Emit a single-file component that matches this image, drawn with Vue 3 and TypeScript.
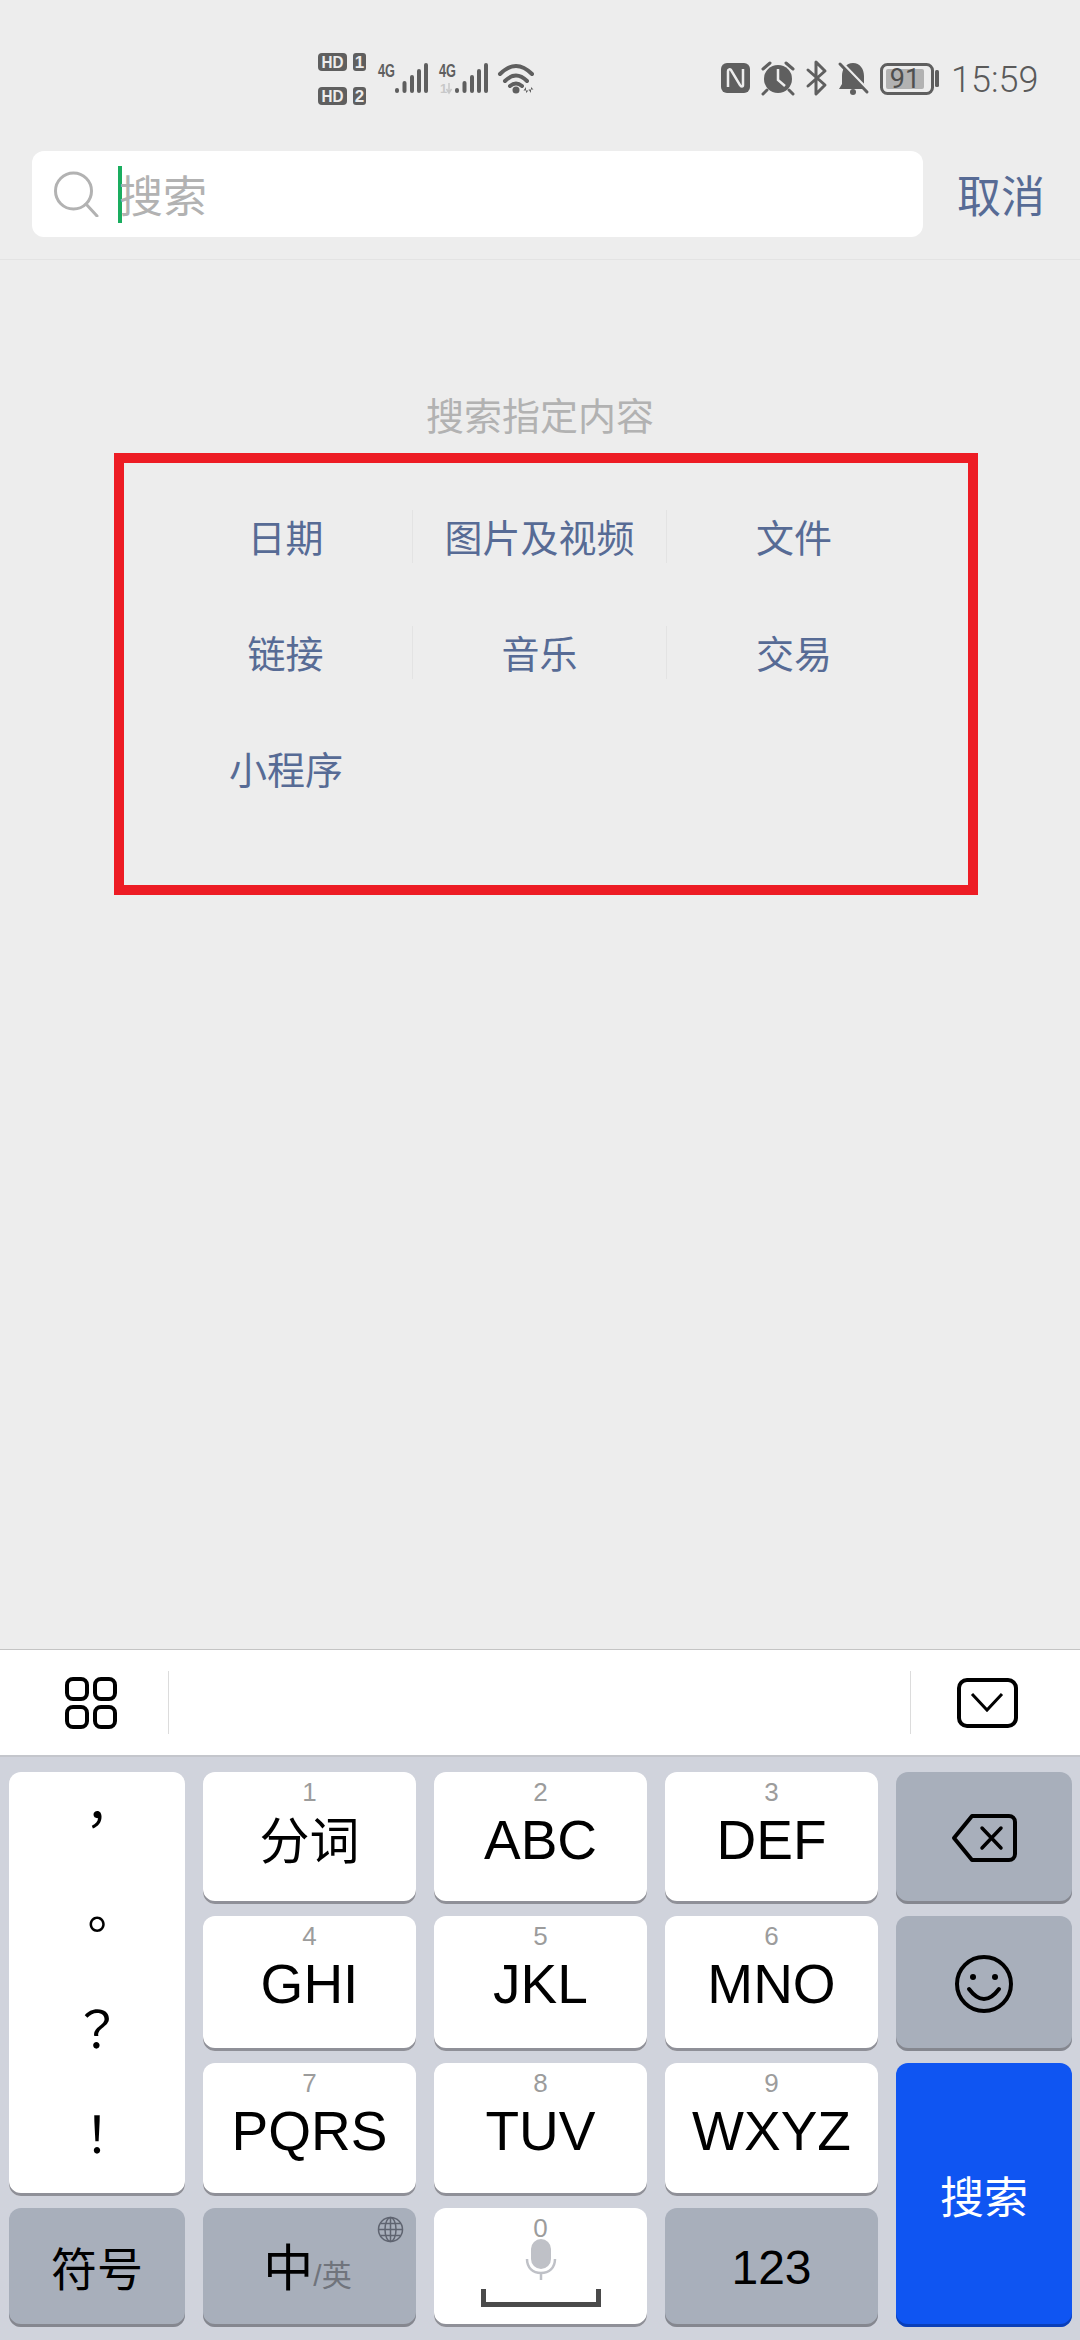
<template>
  <div class="page">
    <div class="status">
      <svg class="status-left" width="222" height="60" viewBox="0 0 222 60">
        <rect x="0" y="3" width="29" height="18" rx="4" fill="#5f5f5f" />
        <text x="14.5" y="18" class="hd" textLength="22" lengthAdjust="spacingAndGlyphs">HD</text>
        <rect x="35" y="3" width="13" height="18" rx="3" fill="#5f5f5f" />
        <text x="41.5" y="18" class="hd">1</text>
        <rect x="0" y="37" width="29" height="18" rx="4" fill="#5f5f5f" />
        <text x="14.5" y="52" class="hd" textLength="22" lengthAdjust="spacingAndGlyphs">HD</text>
        <rect x="35" y="37" width="13" height="18" rx="3" fill="#5f5f5f" />
        <text x="41.5" y="52" class="hd">2</text>

        <text x="60" y="27" class="net" textLength="17" lengthAdjust="spacingAndGlyphs">4G</text>
        <rect v-for="b in bars" :key="'a' + b.x" :x="77 + b.x" :y="43 - b.h" width="4" :height="b.h" rx="2" fill="#5f5f5f" />
        <text x="121" y="27" class="net" textLength="17" lengthAdjust="spacingAndGlyphs">4G</text>
        <rect v-for="b in bars" :key="'b' + b.x" :x="137 + b.x" :y="43 - b.h" width="4" :height="b.h" rx="2" fill="#5f5f5f" />
        <text x="122" y="43" class="net-small">1</text>
        <path d="M131 33v10M128.500 39l2.500 4 2.500-4" stroke="#c8c8c8" stroke-width="1.500" fill="none" />

        <path d="M182 24Q198 8 214 24M187 31Q198 20 209 31M192 36Q198 31 204 36" stroke="#5f5f5f" stroke-width="4" fill="none" stroke-linecap="round" />
        <circle cx="198" cy="40" r="3.500" fill="#5f5f5f" />
        <path d="M208 43v-6l-2.500 3.500h5zM213 37v6l-2.500-3.500h5z" fill="#5f5f5f" />
      </svg>

      <svg class="status-right" width="220" height="60" viewBox="0 0 220 60">
        <rect x="1" y="13" width="29" height="30" rx="6" fill="#5f5f5f" />
        <path d="M8 37V21c0-2 2-2 3-1l9 15c1 2 3 2 3 0V19" stroke="#ededed" stroke-width="2.500" fill="none" />

        <circle cx="58" cy="29" r="14" fill="#5f5f5f" />
        <path d="M58 19v11l7 6" stroke="#ededed" stroke-width="2.500" fill="none" />
        <path d="M43 19l7-6M66 13l7 6M47 40l-4 4M69 40l4 4" stroke="#5f5f5f" stroke-width="3" stroke-linecap="round" />

        <path d="M88 20l17 15-9 9V12l9 9-17 15" stroke="#5f5f5f" stroke-width="3" fill="none" stroke-linejoin="round" stroke-linecap="round" />

        <path d="M133 13c-7 0-11 6-11 13v8l-3 5h28l-3-5v-8c0-7-4-13-11-13z" fill="#5f5f5f" />
        <circle cx="133" cy="42" r="3" fill="#5f5f5f" />
        <path d="M122 13l27 28" stroke="#ededed" stroke-width="3" />
        <path d="M120 14l27 28" stroke="#5f5f5f" stroke-width="3" stroke-linecap="round" />

        <rect x="161.500" y="14.500" width="51" height="29" rx="6" stroke="#5f5f5f" stroke-width="3" fill="none" />
        <rect x="166" y="19" width="38" height="20" rx="2" fill="#b2b2b2" />
        <rect x="215" y="20" width="4" height="17" rx="1.500" fill="#5f5f5f" />
        <text x="185" y="38" class="battery">91</text>
      </svg>

      <span class="time">15:59</span>
    </div>

    <div class="search-row">
      <div class="search-box">
        <svg class="search-icon" width="46" height="46" viewBox="0 0 46 46">
          <circle cx="20.500" cy="20" r="18" stroke="#b2b2b2" stroke-width="3" fill="none" />
          <path d="M33 33l11 12" stroke="#b2b2b2" stroke-width="3" stroke-linecap="round" />
        </svg>
        <i class="cursor"></i>
        <span class="placeholder">搜索</span>
      </div>
      <span class="cancel">取消</span>
    </div>

    <div class="content">
      <p class="hint">搜索指定内容</p>
      <div class="marked">
        <div class="types">
          <div
            v-for="(t, i) in types"
            :key="t"
            class="type"
            :class="{ divided: i % 3 !== 2 && i !== types.length - 1 }"
          >{{ t }}</div>
        </div>
      </div>
    </div>

    <div class="keyboard">
      <div class="toolbar">
        <svg class="tool-grid" width="52" height="52" viewBox="0 0 52 52" fill="none" stroke="#000" stroke-width="4">
          <rect x="2" y="2" width="20" height="20" rx="6" />
          <rect x="30" y="2" width="20" height="20" rx="6" />
          <rect x="2" y="30" width="20" height="20" rx="6" />
          <rect x="30" y="30" width="20" height="20" rx="6" />
        </svg>
        <i class="tool-line"></i>
        <div class="tool-space"></div>
        <i class="tool-line"></i>
        <svg class="tool-hide" width="61" height="50" viewBox="0 0 61 50" fill="none" stroke="#000">
          <rect x="2" y="2" width="57" height="46" rx="8" stroke-width="4" />
          <path d="M15 16l15 16 15-16" stroke-width="3" />
        </svg>
      </div>

      <div class="keys">
        <div class="key punct">
          <span v-for="p in puncts" :key="p">{{ p }}</span>
        </div>

        <div v-for="k in letterKeys" :key="k.num" class="key letter">
          <span class="num">{{ k.num }}</span>
          <span class="label" :class="{ cjk: k.num === '1' }">{{ k.label }}</span>
        </div>

        <div class="key dark del">
          <svg width="66" height="50" viewBox="0 0 66 50" fill="none" stroke="#000" stroke-linejoin="round">
            <path d="M21 3H58a6 6 0 0 1 6 6V41a6 6 0 0 1-6 6H21L3 25z" stroke-width="4" />
            <path d="M31 15l19 20M50 15L31 35" stroke-width="3.500" stroke-linecap="round" />
          </svg>
        </div>
        <div class="key dark smile">
          <svg width="60" height="60" viewBox="0 0 60 60" fill="none" stroke="#000">
            <circle cx="30" cy="30" r="27" stroke-width="4" />
            <circle cx="19" cy="23" r="3" fill="#000" stroke="none" />
            <circle cx="41" cy="23" r="3" fill="#000" stroke="none" />
            <path d="M15 35Q30 55 45 35" stroke-width="4" stroke-linecap="round" />
          </svg>
        </div>

        <div class="key go">搜索</div>

        <div class="key dark symbol">符号</div>
        <div class="key dark lang">
          <svg class="globe" width="27" height="27" viewBox="0 0 27 27" fill="none" stroke="#5f6470" stroke-width="1.500">
            <circle cx="13.500" cy="13.500" r="12" />
            <ellipse cx="13.500" cy="13.500" rx="5.500" ry="12" />
            <path d="M13.500 1.500v24M1.500 13.500h24M3.500 7.500h20M3.500 19.500h20" />
          </svg>
          <span class="zh">中</span><span class="en">/英</span>
        </div>
        <div class="key space">
          <span class="num">0</span>
          <svg class="mic" width="32" height="41" viewBox="0 0 32 41" fill="none">
            <rect x="6" y="0" width="20" height="30" rx="10" fill="#bfc1c7" />
            <path d="M2 20c0 9 6 14 14 14s14-5 14-14M16 34v7" stroke="#bfc1c7" stroke-width="2.500" />
          </svg>
          <svg class="bar" width="120" height="18" viewBox="0 0 120 18">
            <path d="M2.500 0v15.500h115V0" stroke="#4a4a4a" stroke-width="5" fill="none" />
          </svg>
        </div>
        <div class="key dark nums">123</div>
      </div>
    </div>
  </div>
</template>

<script setup lang="ts">
interface LetterKey {
  num: string
  label: string
}

const types = ['日期', '图片及视频', '文件', '链接', '音乐', '交易', '小程序']
const puncts = ['，', '。', '？', '！']

const letterKeys: LetterKey[] = [
  { num: '1', label: '分词' },
  { num: '2', label: 'ABC' },
  { num: '3', label: 'DEF' },
  { num: '4', label: 'GHI' },
  { num: '5', label: 'JKL' },
  { num: '6', label: 'MNO' },
  { num: '7', label: 'PQRS' },
  { num: '8', label: 'TUV' },
  { num: '9', label: 'WXYZ' },
]

const bars = [
  { x: 0, h: 5 },
  { x: 7.5, h: 12 },
  { x: 15, h: 18 },
  { x: 22, h: 24 },
  { x: 29, h: 30 },
]
</script>

<style>
html,
body {
  margin: 0;
  background: #ededed;
}
</style>

<style scoped>
.page {
  width: 1080px;
  height: 2340px;
  display: flex;
  flex-direction: column;
  overflow: hidden;
  background: #ededed;
  font-family: "Liberation Sans", "Noto Sans CJK SC", sans-serif;
}

/* status bar */
.status {
  height: 151px;
  flex: none;
  padding: 50px 0 0 318px;
  box-sizing: border-box;
  display: flex;
  align-items: flex-start;
}

.status-right {
  margin-left: 180px;
}

.hd {
  font-size: 17px;
  font-weight: 700;
  fill: #ededed;
  text-anchor: middle;
}

.net {
  font-size: 18px;
  font-weight: 700;
  fill: #5f5f5f;
}

.net-small {
  font-size: 13px;
  font-weight: 700;
  fill: #c8c8c8;
}

.battery {
  font-family: Roboto, "Liberation Sans", sans-serif;
  font-size: 27px;
  fill: #4f4f4f;
  text-anchor: middle;
}

.time {
  margin-left: 11px;
  font-family: Roboto, "Liberation Sans", sans-serif;
  font-size: 36px;
  font-weight: 300;
  line-height: 60px;
  color: #5a5a5a;
}

/* search bar */
.search-row {
  height: 109px;
  flex: none;
  padding: 0 0 22px 32px;
  box-sizing: border-box;
  display: flex;
  align-items: center;
  border-bottom: 1px solid #e3e3e3;
}

.search-box {
  width: 891px;
  height: 86px;
  padding-left: 21px;
  box-sizing: border-box;
  display: flex;
  align-items: center;
  background: #fff;
  border-radius: 12px;
}

.search-icon {
  flex: none;
}

.cursor {
  width: 4px;
  height: 57px;
  margin: 0 -3px 0 19px;
  background: #1aad5f;
}

.placeholder {
  font-size: 44px;
  color: #b2b2b2;
}

.cancel {
  margin-left: 34px;
  font-size: 44px;
  color: #576b95;
}

/* search types */
.content {
  flex: 1;
  padding-top: 132px;
}

.hint {
  margin: 0;
  font-size: 38px;
  line-height: 50px;
  text-align: center;
  color: #b2b2b2;
}

.marked {
  width: 864px;
  height: 442px;
  margin: 11px 0 0 114px;
  padding: 47px 0 0 35px;
  box-sizing: border-box;
  border: 10px solid #ed1c24;
}

.types {
  width: 762px;
  display: grid;
  grid-template-columns: repeat(3, 254px);
  row-gap: 63px;
}

.type {
  height: 53px;
  padding-top: 5px;
  box-sizing: border-box;
  font-size: 38px;
  line-height: 48px;
  text-align: center;
  color: #576b95;
}

.type.divided {
  border-right: 1px solid #e3e3e3;
}

/* keyboard */
.keyboard {
  height: 691px;
  flex: none;
  display: flex;
  flex-direction: column;
  background: #d0d3dc;
}

.toolbar {
  height: 108px;
  flex: none;
  box-sizing: border-box;
  padding: 0 62px 0 65px;
  display: flex;
  align-items: center;
  background: #fff;
  border-top: 1px solid #c4c4c4;
  border-bottom: 2px solid #c4c6cc;
}

.tool-line {
  width: 1px;
  height: 63px;
  background: #dcdcdc;
}

.tool-grid {
  margin-right: 51px;
}

.tool-space {
  flex: 1;
}

.tool-hide {
  margin-left: 46px;
}

.keys {
  padding: 15px 0 0 9px;
  display: grid;
  grid-template-columns: 176px 213px 213px 213px 176px;
  grid-template-rows: 132px 135px 133px 119px;
  gap: 12px 18px;
}

.key {
  position: relative;
  display: flex;
  align-items: center;
  justify-content: center;
  background: #fff;
  border-radius: 12px;
  box-shadow: inset 0 -3px 0 #8f9098;
  color: #000;
}

.key.dark {
  background: #a8afbb;
  box-shadow: inset 0 -3px 0 #85878f;
}

.punct {
  grid-column: 1;
  grid-row: 1 / 4;
  flex-direction: column;
  justify-content: flex-start;
  font-family: "Noto Sans CJK TC", sans-serif;
  font-size: 50px;
}

.punct span {
  height: 105px;
  line-height: 89px;
  width: 100%;
  text-align: center;
}

.letter {
  flex-direction: column;
  justify-content: flex-start;
}

.num {
  margin-top: 7px;
  font-size: 26px;
  line-height: 26px;
  color: #9c9c9c;
}

.label {
  margin-top: 5px;
  font-size: 55px;
  line-height: 60px;
}

.label.cjk {
  font-size: 50px;
  line-height: 64px;
}

.del {
  grid-column: 5;
  grid-row: 1;
}

.smile {
  grid-column: 5;
  grid-row: 2;
}

.go {
  grid-column: 5;
  grid-row: 3 / 5;
  background: #0f55f2;
  box-shadow: inset 0 -3px 0 #0a3fb8;
  font-size: 44px;
  color: #fff;
}

.symbol {
  grid-column: 1;
  grid-row: 4;
  padding-bottom: 4px;
  box-sizing: border-box;
  font-size: 46px;
}

.lang {
  grid-column: 2;
  grid-row: 4;
  align-items: baseline;
  padding: 31px 4px 0 0;
  box-sizing: border-box;
}

.globe {
  position: absolute;
  top: 8px;
  right: 12px;
}

.zh {
  font-size: 50px;
  line-height: 60px;
}

.en {
  font-size: 30px;
  color: #70747c;
}

.space {
  grid-column: 3;
  grid-row: 4;
  flex-direction: column;
  justify-content: flex-start;
}

.mic {
  margin-top: -2px;
}

.bar {
  margin-top: 9px;
}

.nums {
  grid-column: 4;
  grid-row: 4;
  font-size: 48px;
}
</style>
